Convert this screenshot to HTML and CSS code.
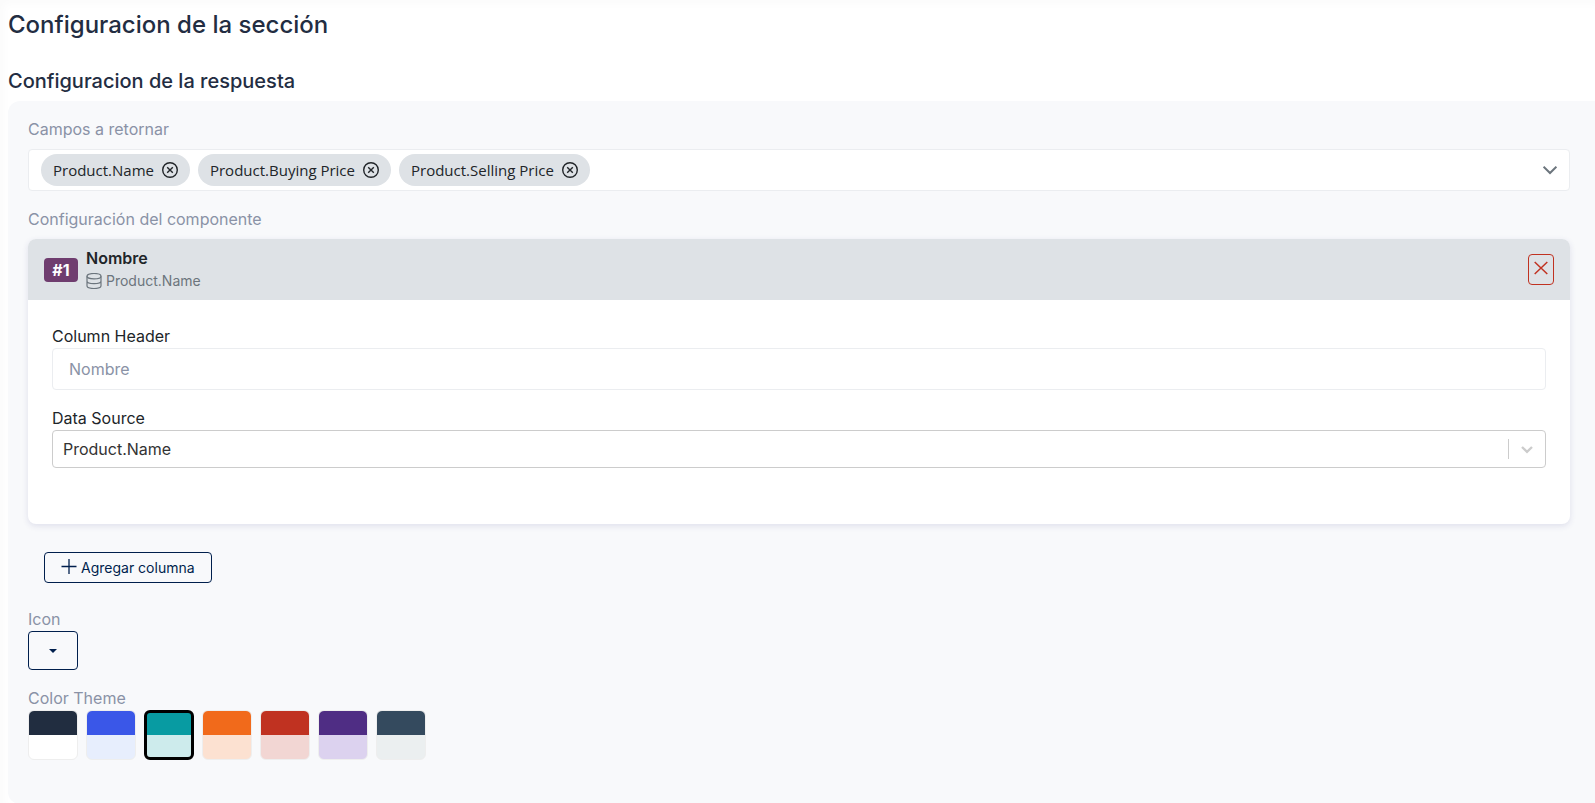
FILE: index.html
```html
<!DOCTYPE html>
<html lang="es">

<head>
    <meta charset="UTF-8">
    <meta name="viewport" content="width=device-width, initial-scale=1.0">
    <title>Configuracion de la sección</title>
    <link rel="stylesheet" href="styles.css">
</head>

<body>
    <main>
        <h1>Configuracion de la sección</h1>
        <h2>Configuracion de la respuesta</h2>

        <form class="panel">
            <div class="label" id="fieldsLabel">Campos a retornar</div>
            <div class="multi" role="group" aria-labelledby="fieldsLabel">
                <div class="chip">
                    <span>Product.Name</span>
                    <button type="button" aria-label="Quitar Product.Name">
                        <svg width="16" height="16" viewBox="0 0 16 16"><circle cx="8" cy="8" r="7.3"/><path d="M5.2 5.2l5.6 5.6M10.8 5.2l-5.6 5.6"/></svg>
                    </button>
                </div>
                <div class="chip">
                    <span>Product.Buying Price</span>
                    <button type="button" aria-label="Quitar Product.Buying Price">
                        <svg width="16" height="16" viewBox="0 0 16 16"><circle cx="8" cy="8" r="7.3"/><path d="M5.2 5.2l5.6 5.6M10.8 5.2l-5.6 5.6"/></svg>
                    </button>
                </div>
                <div class="chip">
                    <span>Product.Selling Price</span>
                    <button type="button" aria-label="Quitar Product.Selling Price">
                        <svg width="16" height="16" viewBox="0 0 16 16"><circle cx="8" cy="8" r="7.3"/><path d="M5.2 5.2l5.6 5.6M10.8 5.2l-5.6 5.6"/></svg>
                    </button>
                </div>
                <button type="button" class="toggle" aria-label="Abrir lista">
                    <svg width="14" height="14" viewBox="0 0 14 14"><path d="M.6 3.7L7 10l6.4-6.3"/></svg>
                </button>
            </div>

            <div class="label">Configuración del componente</div>
            <section class="card">
                <header>
                    <span class="badge">#1</span>
                    <div class="heading">
                        <h3>Nombre</h3>
                        <p>
                            <svg width="16" height="16" viewBox="0 0 16 16"><ellipse cx="8" cy="3.2" rx="7" ry="2.7"/><path d="M1 3.2v9.6c0 1.5 3.1 2.7 7 2.7s7-1.200 7-2.7V3.2M1 8c0 1.5 3.1 2.7 7 2.7S15 9.5 15 8"/></svg>
                            <span>Product.Name</span>
                        </p>
                    </div>
                    <button type="button" class="remove" aria-label="Eliminar columna">
                        <svg width="14" height="14" viewBox="0 0 14 14"><path d="M.7 1l12.6 12M13.3 1L.7 13"/></svg>
                    </button>
                </header>
                <div class="fields">
                    <label for="columnHeader">Column Header</label>
                    <input type="text" id="columnHeader" name="columnHeader" placeholder="Nombre">
                    <label for="dataSource">Data Source</label>
                    <div class="select">
                        <select id="dataSource" name="dataSource">
                            <option selected>Product.Name</option>
                            <option>Product.Buying Price</option>
                            <option>Product.Selling Price</option>
                        </select>
                        <span class="arrow">
                            <svg width="20" height="20" viewBox="0 0 20 20"><path d="M5 8l5 4.8L15 8"/></svg>
                        </span>
                    </div>
                </div>
            </section>

            <button type="button" class="add">
                <svg width="16" height="16" viewBox="0 0 16 16"><path d="M8 0v15M.5 7.5h15"/></svg>
                <span>Agregar columna</span>
            </button>

            <div class="label" id="iconLabel">Icon</div>
            <button type="button" class="iconPicker" aria-labelledby="iconLabel"></button>

            <fieldset>
                <legend class="label">Color Theme</legend>
                <div class="themes">
                    <input type="radio" name="theme" value="dark" class="dark" aria-label="Dark">
                    <input type="radio" name="theme" value="blue" class="blue" aria-label="Blue">
                    <input type="radio" name="theme" value="teal" class="teal" aria-label="Teal" checked>
                    <input type="radio" name="theme" value="orange" class="orange" aria-label="Orange">
                    <input type="radio" name="theme" value="red" class="red" aria-label="Red">
                    <input type="radio" name="theme" value="purple" class="purple" aria-label="Purple">
                    <input type="radio" name="theme" value="slate" class="slate" aria-label="Slate">
                </div>
            </fieldset>
        </form>
    </main>
</body>

</html>
```
FILE: styles.css
```css
* {
    box-sizing: border-box;
    margin: 0;
    padding: 0;
}

body {
    font-family: Inter, "Liberation Sans", sans-serif;
    font-size: 16px;
    line-height: 24px;
    color: #212529;
    background-color: #fff;
}

button,
input,
select {
    font: inherit;
    color: inherit;
}

button {
    cursor: pointer;
    background: none;
    border: none;
}

svg {
    display: block;
    flex: none;
    fill: none;
    stroke: currentColor;
}

main {
    padding: 9px 0 0 8px;
    box-shadow: inset 4px 4px 8px rgba(0, 0, 0, 0.02);
}

h1,
h2 {
    font-weight: 500;
    color: #232d42;
}

h1 {
    font-size: 24px;
    line-height: 32px;
    margin-bottom: 28px;
}

h2 {
    font-size: 20px;
    line-height: 24px;
    margin-bottom: 8px;
}

.panel {
    padding: 16px 25px 44px 20px;
    background-color: #f8f9fb;
    border-radius: 12px 0 0 12px;
}

.label {
    color: #8a92a6;
}

/* fields to return */
.multi {
    display: flex;
    align-items: center;
    gap: 8px;
    height: 42px;
    padding: 0 12px;
    margin: 8px 0 16px;
    background-color: #fff;
    border: 1px solid #ebedf0;
    border-radius: 4px;
}

.chip {
    display: flex;
    align-items: center;
    gap: 8px;
    height: 32px;
    padding: 0 12px;
    font-family: "Open Sans", "Noto Sans", sans-serif;
    font-size: 15px;
    background-color: #dee2e6;
    border-radius: 16px;
}

.chip svg {
    stroke-width: 1.4;
}

.toggle {
    margin-left: auto;
    color: #6c757d;
}

.toggle svg {
    stroke-width: 2;
}

/* column card */
.card {
    margin: 8px 0 28px;
    background-color: #fff;
    border-radius: 8px;
    box-shadow: 0 2px 6px rgba(40, 40, 120, 0.12);
}

.card header {
    display: flex;
    align-items: center;
    gap: 8px;
    height: 61px;
    padding: 0 16px;
    background-color: #dee2e6;
    border-radius: 8px 8px 0 0;
}

.badge {
    min-width: 34px;
    font-weight: 700;
    text-align: center;
    color: #fff;
    background-color: #6f3d6f;
    border-radius: 4px;
}

.heading {
    flex: 1;
}

.heading h3 {
    font-size: 16px;
    font-weight: 600;
    line-height: 22px;
}

.heading p {
    display: flex;
    align-items: center;
    gap: 4px;
    font-size: 14px;
    line-height: 24px;
    color: #6c757d;
}

.heading svg {
    stroke-width: 1.2;
}

.remove {
    display: flex;
    justify-content: center;
    width: 26px;
    height: 31px;
    padding-top: 6px;
    color: #c03221;
    border: 1px solid #c03221;
    border-radius: 4px;
}

.remove svg {
    stroke-width: 1.5;
}

.fields {
    padding: 24px 24px 56px;
}

.fields label {
    display: block;
}

.fields input {
    display: block;
    width: 100%;
    height: 42px;
    padding: 0 16px;
    margin-bottom: 16px;
    background-color: #fff;
    border: 1px solid #ebedf0;
    border-radius: 4px;
}

.fields input::placeholder {
    color: #8a92a6;
    opacity: 1;
}

.select {
    position: relative;
}

.select select {
    display: block;
    appearance: none;
    width: 100%;
    height: 38px;
    padding: 0 48px 0 10px;
    color: #333;
    background-color: #fff;
    border: 1px solid #ccc;
    border-radius: 4px;
}

.select .arrow {
    position: absolute;
    top: 9px;
    right: 1px;
    padding: 0 8px;
    color: #ccc;
    border-left: 1px solid #ccc;
    pointer-events: none;
}

.arrow svg {
    stroke-width: 2.4;
}

.add {
    display: flex;
    align-items: center;
    gap: 4px;
    height: 31px;
    padding: 0 16px;
    margin: 0 0 24px 16px;
    font-size: 14px;
    color: #001f4d;
    border: 1px solid #001f4d;
    border-radius: 4px;
}

.add svg {
    margin-bottom: 2px;
    stroke-width: 1.3;
}

.iconPicker {
    display: flex;
    align-items: center;
    justify-content: center;
    width: 50px;
    height: 39px;
    margin-bottom: 16px;
    border: 1px solid #001f4d;
    border-radius: 4px;
}

.iconPicker::after {
    content: "";
    border: 4px solid transparent;
    border-top-color: #001f4d;
    border-bottom: none;
}

/* colour themes */
fieldset {
    border: none;
}

.themes {
    display: flex;
    gap: 8px;
}

.themes input {
    appearance: none;
    width: 50px;
    height: 50px;
    border: 1px solid #eee;
    border-radius: 6px;
    cursor: pointer;
}

.themes input:checked {
    border: 3px solid #000;
}

.dark {
    background: linear-gradient(#212d40 50%, #fff 50%);
}

.blue {
    background: linear-gradient(#3a57e8 50%, #e7eefd 50%);
}

.teal {
    background: linear-gradient(#089ba2 50%, #cdebec 50%);
}

.orange {
    background: linear-gradient(#f16a1b 50%, #fce1d1 50%);
}

.red {
    background: linear-gradient(#c03221 50%, #f2d6d3 50%);
}

.purple {
    background: linear-gradient(#4f2d84 50%, #dcd2ef 50%);
}

.slate {
    background: linear-gradient(#344a5e 50%, #ebeff0 50%);
}
```
